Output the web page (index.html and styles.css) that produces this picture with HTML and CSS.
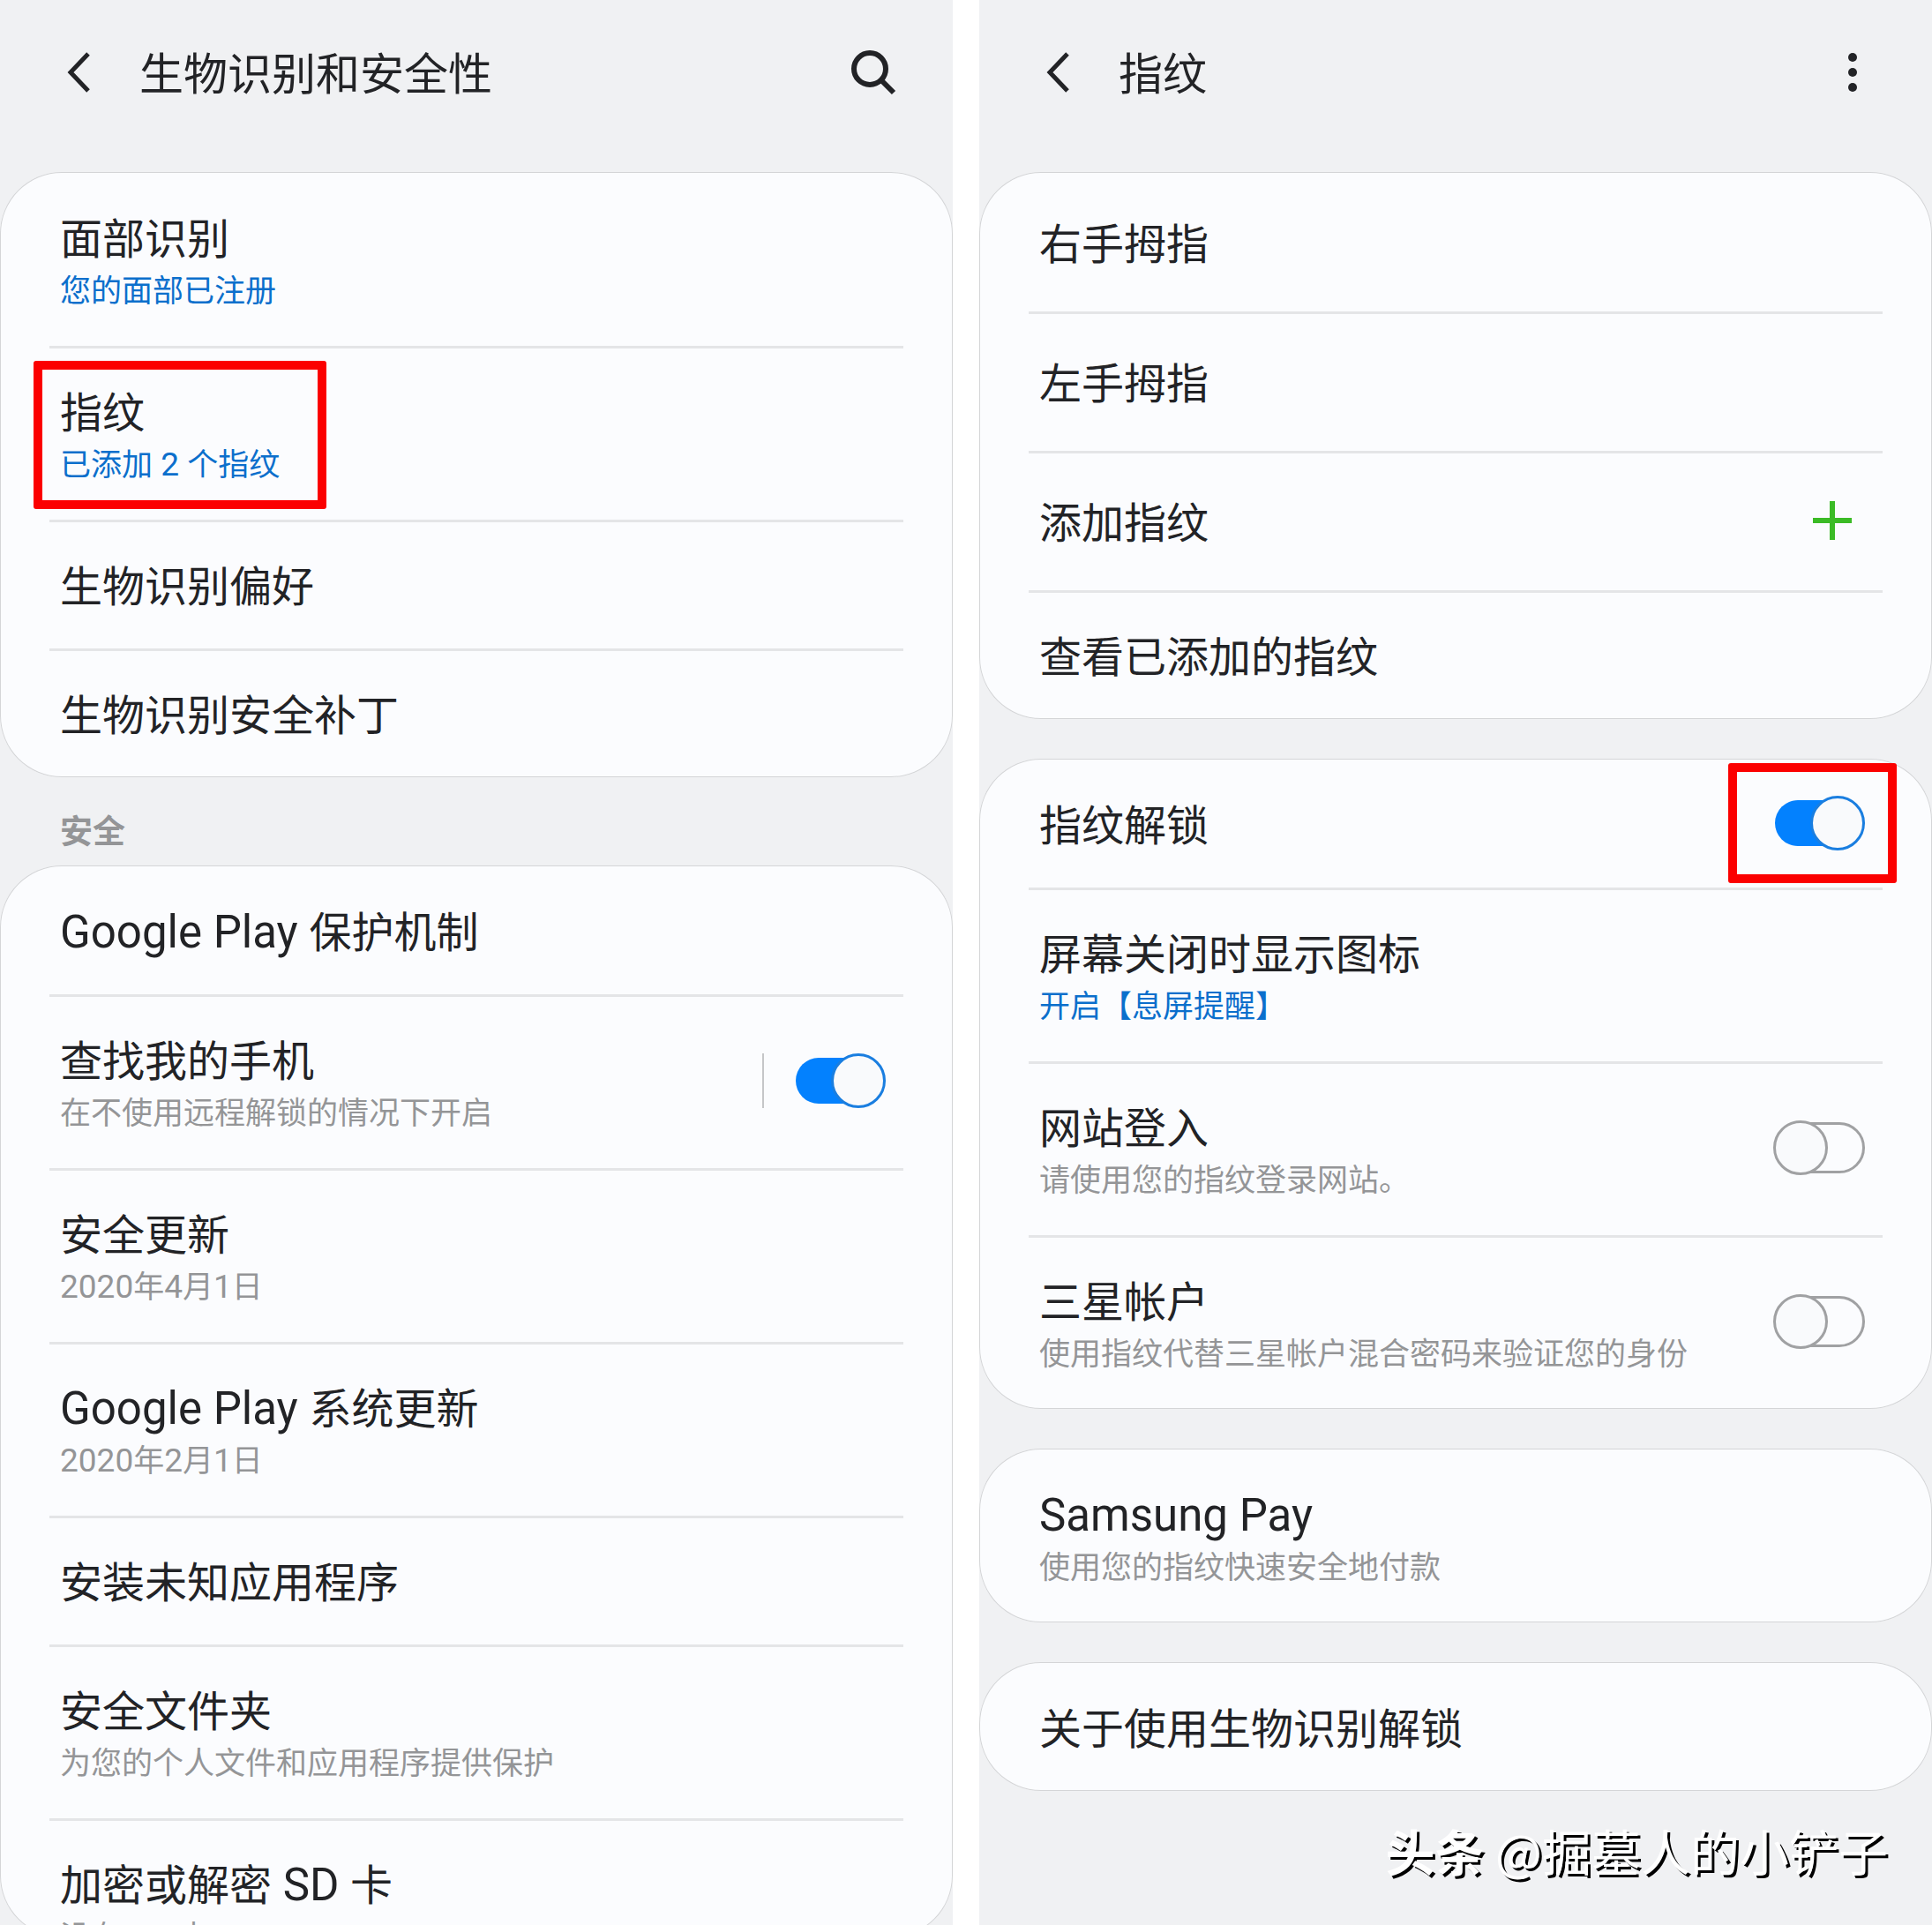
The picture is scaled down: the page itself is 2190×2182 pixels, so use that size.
FILE: index.html
```html
<!DOCTYPE html>
<html lang="zh-CN">
<head>
  <meta charset="UTF-8">
  <meta name="viewport" content="width=device-width, initial-scale=1.0">
  <title>生物识别和安全性</title>
  <link rel="stylesheet" href="styles.css">
</head>
<body>

<main class="screens">

  <!-- Biometrics and security -->
  <section class="screen">
    <header class="topbar">
      <button class="icon-btn back" type="button" aria-label="返回">
        <svg width="28" height="48" viewBox="0 0 28 48"><path d="M25 2 L5 23 L25 44" fill="none" stroke="#222326" stroke-width="5"/></svg>
      </button>
      <h1>生物识别和安全性</h1>
      <button class="icon-btn search" type="button" aria-label="搜索">
        <svg width="52" height="52" viewBox="0 0 52 52"><circle cx="22" cy="21" r="18" fill="none" stroke="#222326" stroke-width="6"/><path d="M34 33 L49 48" stroke="#222326" stroke-width="6"/></svg>
      </button>
    </header>

    <div class="card">
      <a class="row tall" href="#">
        <span class="text"><span class="title">面部识别</span><span class="sub blue">您的面部已注册</span></span>
      </a>
      <a class="row tall" href="#">
        <span class="text"><span class="title">指纹</span><span class="sub blue">已添加<span class="latin"> 2 </span>个指纹</span></span>
        <span class="mark mark-text"></span>
      </a>
      <a class="row" href="#"><span class="title">生物识别偏好</span></a>
      <a class="row" href="#"><span class="title">生物识别安全补丁</span></a>
    </div>

    <h2>安全</h2>

    <div class="card card-fill">
      <a class="row" href="#"><span class="title"><span class="latin">Google Play </span>保护机制</span></a>
      <div class="row tall">
        <label class="text" for="findPhone"><span class="title">查找我的手机</span><span class="sub">在不使用远程解锁的情况下开启</span></label>
        <span class="bar"></span>
        <input class="switch" type="checkbox" id="findPhone" checked>
      </div>
      <a class="row tall" href="#">
        <span class="text"><span class="title">安全更新</span><span class="sub"><span class="latin">2020</span>年<span class="latin">4</span>月<span class="latin">1</span>日</span></span>
      </a>
      <a class="row tall" href="#">
        <span class="text"><span class="title"><span class="latin">Google Play </span>系统更新</span><span class="sub"><span class="latin">2020</span>年<span class="latin">2</span>月<span class="latin">1</span>日</span></span>
      </a>
      <a class="row" href="#"><span class="title">安装未知应用程序</span></a>
      <a class="row tall" href="#">
        <span class="text"><span class="title">安全文件夹</span><span class="sub">为您的个人文件和应用程序提供保护</span></span>
      </a>
      <a class="row tall" href="#">
        <span class="text"><span class="title">加密或解密<span class="latin"> SD </span>卡</span><span class="sub">没有<span class="latin"> SD </span>卡</span></span>
      </a>
    </div>
  </section>

  <!-- Fingerprints -->
  <section class="screen">
    <header class="topbar">
      <button class="icon-btn back" type="button" aria-label="返回">
        <svg width="28" height="48" viewBox="0 0 28 48"><path d="M25 2 L5 23 L25 44" fill="none" stroke="#222326" stroke-width="5"/></svg>
      </button>
      <h1>指纹</h1>
      <button class="icon-btn more" type="button" aria-label="更多">
        <svg width="12" height="46" viewBox="0 0 12 46"><g fill="#222326"><circle cx="6" cy="5" r="5"/><circle cx="6" cy="22" r="5"/><circle cx="6" cy="39" r="5"/></g></svg>
      </button>
    </header>

    <div class="card">
      <a class="row medium" href="#"><span class="title">右手拇指</span></a>
      <a class="row medium" href="#"><span class="title">左手拇指</span></a>
      <a class="row medium" href="#">
        <span class="title">添加指纹</span>
        <svg class="plus" width="74" height="44" viewBox="0 0 74 44"><path d="M15 22 H59 M37 0 V44" stroke="#3bbb26" stroke-width="6"/></svg>
      </a>
      <a class="row" href="#"><span class="title">查看已添加的指纹</span></a>
    </div>

    <div class="card">
      <div class="row">
        <label class="title" for="unlock">指纹解锁</label>
        <input class="switch" type="checkbox" id="unlock" checked>
        <span class="mark mark-switch"></span>
      </div>
      <a class="row tall" href="#">
        <span class="text"><span class="title">屏幕关闭时显示图标</span><span class="sub blue">开启【息屏提醒】</span></span>
      </a>
      <div class="row tall">
        <label class="text" for="webLogin"><span class="title">网站登入</span><span class="sub">请使用您的指纹登录网站。</span></label>
        <input class="switch" type="checkbox" id="webLogin">
      </div>
      <div class="row tall">
        <label class="text" for="account"><span class="title">三星帐户</span><span class="sub">使用指纹代替三星帐户混合密码来验证您的身份</span></label>
        <input class="switch" type="checkbox" id="account">
      </div>
    </div>

    <div class="card">
      <a class="row tall" href="#">
        <span class="text"><span class="title"><span class="latin">Samsung Pay</span></span><span class="sub">使用您的指纹快速安全地付款</span></span>
      </a>
    </div>

    <div class="card">
      <a class="row" href="#"><span class="title">关于使用生物识别解锁</span></a>
    </div>

    <p class="watermark"><b>头条</b> @掘墓人的小铲子</p>
  </section>

</main>

</body>
</html>
```
FILE: styles.css
```css
*,
*::before,
*::after {
  box-sizing: border-box;
}
body {
  margin: 0;
  background-color: #fff;
  color: #222326;
  font-family: Roboto, "Noto Sans CJK SC", sans-serif;
}
.screens {
  display: grid;
  grid-template-columns: 1fr 1fr;
  gap: 30px;
  height: 100vh;
}
.screen {
  display: flex;
  flex-direction: column;
  min-width: 0;
  min-height: 0;
  overflow: hidden;
  background-color: #f0f1f3;
}

/* top bar */
.topbar {
  display: flex;
  flex-shrink: 0;
  align-items: center;
  height: 165px;
  margin-bottom: 30px;
  padding: 0 64px 0 75px;
}
.topbar h1 {
  flex: 1;
  margin: 0 0 0 55px;
  padding-top: 5px;
  font-size: 50px;
  font-weight: 400;
  line-height: 66px;
}
.icon-btn {
  padding: 0;
  border: none;
  background: none;
  cursor: pointer;
}
.icon-btn svg {
  display: block;
}
.more {
  margin-right: 20px;
}

h2 {
  flex-shrink: 0;
  margin: 0;
  padding: 38px 68px 12px;
  color: #949597;
  font-size: 37px;
  font-weight: 700;
  line-height: 50px;
}

/* cards and rows */
.card {
  flex-shrink: 0;
  padding-top: 3px;
  border-radius: 70px;
  background-color: #fbfcfe;
  box-shadow: inset 0 0 0 1px #d4d5d7;
}
.card + .card {
  margin-top: 45px;
}
.card-fill {
  flex: 1;
  min-height: 0;
  margin-bottom: -14px; /* runs on below the fold */
  overflow: hidden;
}
.row {
  position: relative;
  display: flex;
  align-items: center;
  height: 146px;
  margin: 0 56px;
  padding: 0 20px 0 12px;
  border-bottom: 3px solid #e4e5e7;
  color: inherit;
  text-decoration: none;
}
.row.medium {
  height: 158px;
}
.row.tall {
  height: 197px;
}
.row:last-child {
  height: 143px;
  border-bottom: none;
}
.row.tall:last-child {
  height: 194px;
}
.text,
.row > .title {
  flex: 1;
  padding-top: 4px;
}
.title {
  display: block;
  font-size: 48px;
  line-height: 66px;
}
.sub {
  display: block;
  margin-top: 1px;
  color: #949597;
  font-size: 35px;
  line-height: 50px;
}
.blue {
  color: #0b6fcc;
}
.latin {
  line-height: 1;
  white-space: pre;
}
.title .latin {
  font-size: 51px;
}
.sub .latin {
  font-size: 37px;
}
.bar {
  width: 2px;
  height: 62px;
  margin: 0 34px 4px 0;
  background-color: #c5c6c8;
}
.plus {
  margin-bottom: 4px;
}

/* switch */
.switch {
  appearance: none;
  position: relative;
  width: 104px;
  height: 62px;
  margin: 0 0 4px;
  cursor: pointer;
}
.switch::before,
.switch::after {
  content: "";
  position: absolute;
  border: 3px solid #a0a1a3;
  border-radius: 31px;
}
.switch::before {
  inset: 2px 0 2px 12px;
}
.switch::after {
  top: 0;
  left: 0;
  width: 62px;
  height: 62px;
  background-color: #f9fafc;
}
.switch:checked::before {
  inset: 5px 12px 5px 2px;
  border: none;
  background-color: #0381fe;
}
.switch:checked::after {
  left: 42px;
  border-color: #1a7ee0;
}

/* red highlight boxes */
.mark {
  position: absolute;
  border: 10px solid #fb0000;
  border-radius: 3px;
  pointer-events: none;
}
.mark-text {
  top: 14px;
  left: -18px;
  width: 332px;
  height: 168px;
}
.mark-switch {
  top: 2px;
  right: -16px;
  width: 191px;
  height: 136px;
}

.watermark {
  margin: 27px 50px 0;
  color: #fff;
  font-family: "Noto Sans CJK SC", sans-serif;
  font-size: 56px;
  line-height: 80px;
  text-align: right;
  text-shadow: 3px 3px 0 #000;
}
```
